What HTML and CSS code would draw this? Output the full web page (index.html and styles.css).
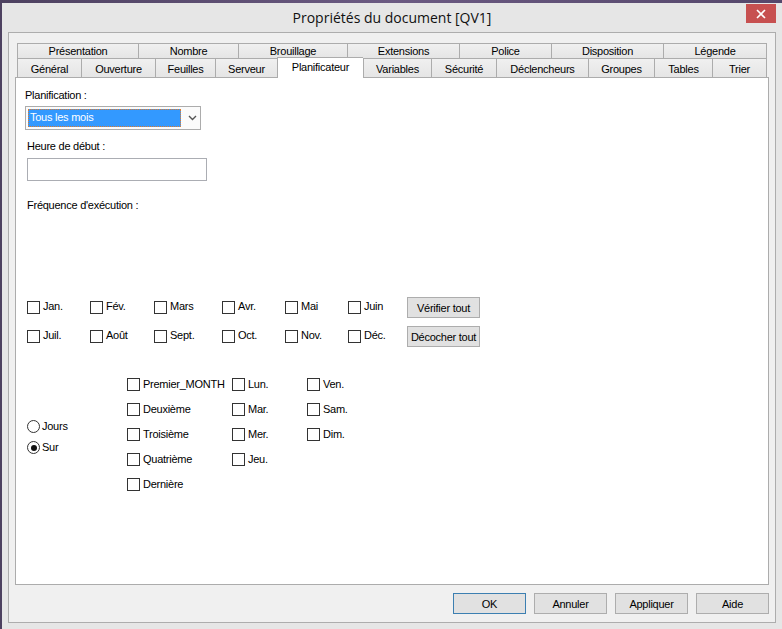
FILE: index.html
```html
<!DOCTYPE html>
<html lang="fr">
<head>
<meta charset="utf-8">
<title>Propriétés du document [QV1]</title>
<link rel="stylesheet" href="styles.css">
</head>
<body>
<div class="window">
  <div class="titlebar">
    <span></span>
    <div class="title">Propriétés du document [QV1]</div>
    <div class="close"><svg width="10" height="10" viewBox="0 0 10 10"><path d="M1 1 L9 9 M9 1 L1 9" stroke="#fff" stroke-width="1.6" fill="none"/></svg></div>
  </div>
  <div class="client">
    <div class="tabs">
      <div class="tabrow back">
        <div class="tab">Présentation</div>
        <div class="tab">Nombre</div>
        <div class="tab">Brouillage</div>
        <div class="tab">Extensions</div>
        <div class="tab">Police</div>
        <div class="tab">Disposition</div>
        <div class="tab">Légende</div>
      </div>
      <div class="tabrow front">
        <div class="tab">Général</div>
        <div class="tab">Ouverture</div>
        <div class="tab">Feuilles</div>
        <div class="tab">Serveur</div>
        <div class="tab active">Planificateur</div>
        <div class="tab">Variables</div>
        <div class="tab">Sécurité</div>
        <div class="tab">Déclencheurs</div>
        <div class="tab">Groupes</div>
        <div class="tab">Tables</div>
        <div class="tab">Trier</div>
      </div>
    </div>
    <div class="panel">
      <div class="label lbl-plan">Planification :</div>
      <div class="combo">
        <div class="combo-sel">Tous les mois</div>
        <svg class="chevron" width="9" height="6" viewBox="0 0 9 6"><path d="M1 1 L4.5 4.5 L8 1" stroke="#555" stroke-width="1.4" fill="none"/></svg>
      </div>
      <div class="label lbl-heure">Heure de début :</div>
      <div class="textbox"></div>
      <div class="label lbl-freq">Fréquence d'exécution :</div>
      <div class="months">
        <div class="chk m"><span class="box"></span><span class="txt">Jan.</span></div>
        <div class="chk m"><span class="box"></span><span class="txt">Fév.</span></div>
        <div class="chk m"><span class="box"></span><span class="txt">Mars</span></div>
        <div class="chk m"><span class="box"></span><span class="txt">Avr.</span></div>
        <div class="chk m"><span class="box"></span><span class="txt">Mai</span></div>
        <div class="chk m"><span class="box"></span><span class="txt">Juin</span></div>
        <div class="btn">Vérifier tout</div>
        <div class="chk m"><span class="box"></span><span class="txt">Juil.</span></div>
        <div class="chk m"><span class="box"></span><span class="txt">Août</span></div>
        <div class="chk m"><span class="box"></span><span class="txt">Sept.</span></div>
        <div class="chk m"><span class="box"></span><span class="txt">Oct.</span></div>
        <div class="chk m"><span class="box"></span><span class="txt">Nov.</span></div>
        <div class="chk m"><span class="box"></span><span class="txt">Déc.</span></div>
        <div class="btn">Décocher tout</div>
      </div>
      <div class="days">
        <div class="radios">
          <div class="radio"><span class="circle"></span><span class="txt">Jours</span></div>
          <div class="radio"><span class="circle on"></span><span class="txt">Sur</span></div>
        </div>
        <div class="daycol col-ord">
          <div class="chk"><span class="box"></span><span class="txt">Premier_MONTH</span></div>
          <div class="chk"><span class="box"></span><span class="txt">Deuxième</span></div>
          <div class="chk"><span class="box"></span><span class="txt">Troisième</span></div>
          <div class="chk"><span class="box"></span><span class="txt">Quatrième</span></div>
          <div class="chk"><span class="box"></span><span class="txt">Dernière</span></div>
        </div>
        <div class="daycol col-wk1">
          <div class="chk"><span class="box"></span><span class="txt">Lun.</span></div>
          <div class="chk"><span class="box"></span><span class="txt">Mar.</span></div>
          <div class="chk"><span class="box"></span><span class="txt">Mer.</span></div>
          <div class="chk"><span class="box"></span><span class="txt">Jeu.</span></div>
        </div>
        <div class="daycol col-wk2">
          <div class="chk"><span class="box"></span><span class="txt">Ven.</span></div>
          <div class="chk"><span class="box"></span><span class="txt">Sam.</span></div>
          <div class="chk"><span class="box"></span><span class="txt">Dim.</span></div>
        </div>
      </div>
    </div>
    <div class="actions">
      <div class="btn default">OK</div>
      <div class="btn">Annuler</div>
      <div class="btn">Appliquer</div>
      <div class="btn">Aide</div>
    </div>
  </div>
</div>
</body>
</html>
```
FILE: styles.css
```css
* { box-sizing: border-box; }

body {
  margin: 0;
  width: 782px;
  height: 629px;
  overflow: hidden;
  background: linear-gradient(90deg, #4d4160 0%, #6b5a82 50%, #55476b 100%);
  font-family: "Liberation Sans", Arial, sans-serif;
  font-size: 11px;
  letter-spacing: -0.25px;
  color: #000;
}

.window {
  margin: 3px 0 0 2px;
  width: 780px;
  height: 626px;
  background: #e6e6e6;
  padding: 0 6px 6px;
  display: flex;
  flex-direction: column;
}

.titlebar {
  height: 29px;
  display: grid;
  grid-template-columns: 1fr auto 1fr;
}

.title {
  font-family: "Open Sans", "Noto Sans", sans-serif;
  font-size: 14px;
  letter-spacing: 0;
  line-height: 30px;
  color: #111;
  white-space: nowrap;
}

.close {
  justify-self: end;
  align-self: start;
  margin-top: 1px;
  width: 30px;
  height: 19px;
  background: #c75050;
  display: flex;
  align-items: center;
  justify-content: center;
}

.client {
  flex: 1;
  background: #f0f0f0;
  border: 1px solid #adadad;
  padding: 10px 6px 0 6px;
  display: flex;
  flex-direction: column;
}

.tabs {
  margin: 0 2px;
  display: flex;
  flex-direction: column;
}

.tabrow { display: grid; }

.back {
  grid-template-columns: 121px 100px 109px 112px 92px 112px 104px;
}

.front {
  grid-template-columns: 64px 74px 60px 62px 86px 68px 65px 92px 66px 58px 55px;
}

.tab {
  text-align: center;
  white-space: nowrap;
  border-top: 1px solid #acacac;
  border-left: 1px solid #acacac;
  background: linear-gradient(#f0f0f0, #e5e5e5);
}

.tab:last-child { border-right: 1px solid #acacac; }

.back .tab {
  height: 15px;
  line-height: 15px;
}

.front .tab {
  height: 19px;
  line-height: 16px;
  padding-top: 2px;
}

.front .tab.active {
  background: #fff;
  height: 21px;
  margin-top: -1px;
  margin-bottom: -1px;
  line-height: 18px;
  padding-top: 0;
  z-index: 1;
}

.panel {
  height: 508px;
  background: #fff;
  border: 1px solid #acacac;
  padding: 11px 0 0 9px;
  display: flex;
  flex-direction: column;
  align-items: flex-start;
}

.label {
  line-height: 13px;
  white-space: nowrap;
}

.lbl-heure { margin: 10px 0 0 2px; }
.lbl-freq { margin: 18px 0 0 2px; }

.combo {
  margin-top: 4px;
  width: 176px;
  height: 24px;
  border: 1px solid #acacac;
  background: #fbfbfb;
  display: flex;
  align-items: center;
  padding-left: 2px;
}

.combo-sel {
  width: 153px;
  height: 18px;
  background: #3399ff;
  color: #fff;
  border: 1px dotted #e07b2a;
  line-height: 14px;
  padding: 0 0 2px 1px;
}

.chevron { margin-left: 7px; }

.textbox {
  margin: 5px 0 0 2px;
  width: 180px;
  height: 23px;
  border: 1px solid #abadb3;
  background: #fff;
}

.months {
  margin: 85px 0 0 2px;
  display: grid;
  grid-template-columns: 63px 64px 68px 63px 63px 59px 73px;
  grid-auto-rows: 21px;
  row-gap: 8px;
}

.chk, .radio {
  display: flex;
  align-items: center;
  gap: 3px;
  white-space: nowrap;
}

.chk .txt, .radio .txt { line-height: 13px; }
.chk.m .txt { margin-bottom: 2px; }

.box {
  width: 13px;
  height: 13px;
  border: 1px solid #333;
  background: #fff;
  flex: none;
}

.btn {
  width: 73px;
  height: 21px;
  border: 1px solid #adadad;
  background: #e1e1e1;
  display: flex;
  align-items: center;
  justify-content: center;
  white-space: nowrap;
}

.btn.default { border-color: #3c7fb1; }

.days {
  margin: 25px 0 0 2px;
  display: flex;
}

.radios {
  width: 100px;
  padding-top: 44px;
  display: flex;
  flex-direction: column;
}

.radio { height: 21px; gap: 2px; }

.circle {
  width: 13px;
  height: 13px;
  border: 1px solid #333;
  border-radius: 50%;
  background: #fff;
  display: flex;
  align-items: center;
  justify-content: center;
  flex: none;
}

.circle.on::after {
  content: "";
  width: 6px;
  height: 6px;
  border-radius: 50%;
  background: #111;
}

.daycol {
  display: flex;
  flex-direction: column;
}

.daycol .chk { height: 25px; }

.col-ord { width: 105px; }
.col-wk1 { width: 75px; }

.actions {
  margin-top: 8px;
  display: flex;
  justify-content: flex-end;
  gap: 8px;
}
```
